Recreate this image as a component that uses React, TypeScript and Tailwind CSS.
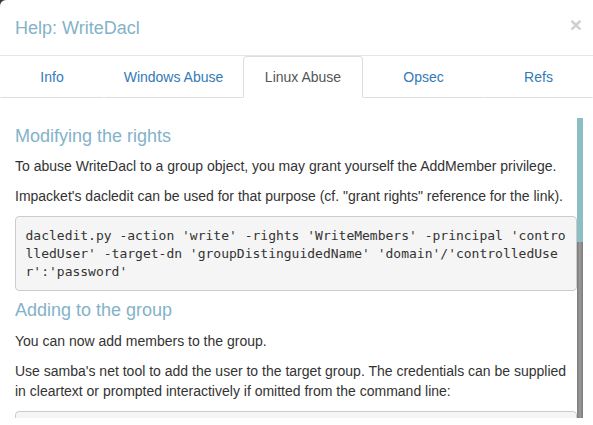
import React from 'react';

const tabs = [
    { label: 'Info', width: 'w-[104px]' },
    { label: 'Windows Abuse', width: 'w-[139px]' },
    { label: 'Linux Abuse', width: 'w-[120px]', active: true },
    { label: 'Opsec', width: 'w-[121px]' },
    { label: 'Refs', width: 'w-[109px]' },
];

function Heading({ children, first }: { children: React.ReactNode; first?: boolean }) {
    return (
        <h4 className={`${first ? 'mt-[8.5px]' : 'mt-[10px]'} mb-[10px] text-[18px] leading-[19.8px] text-[#83b3c9]`}>
            {children}
        </h4>
    );
}

function Para({ children }: { children: React.ReactNode }) {
    return <p className="mb-[10px] text-[14px] leading-[20px] text-[#333]">{children}</p>;
}

function Code({ children }: { children: React.ReactNode }) {
    return (
        <pre className="mb-[10px] rounded-[4px] border border-[#ccc] bg-[#f5f5f5] p-[9.5px] text-[13px] leading-[18px] text-[#333] whitespace-pre-wrap break-all font-['DejaVu_Sans_Mono',monospace]">
            {children}
        </pre>
    );
}

export default function App() {
    return (
        <div className="h-[425px] w-[593px] overflow-hidden bg-[#3a3a3a] font-['Liberation_Sans',Arial,sans-serif]">
            <div className="h-full w-full rounded-tl-[6px] bg-white">
                {/* header */}
                <div className="flex h-[56px] items-center justify-between border-b border-[#e5e5e5] px-[15px]">
                    <h4 className="text-[18px] leading-[26px] text-[#83b3c9]">Help: WriteDacl</h4>
                    <span className="-mt-[6px] mr-[-4px] text-[21px] font-bold leading-none text-[#cfcfcf]">×</span>
                </div>

                {/* tabs */}
                <div className="flex">
                    {tabs.map((t) =>
                        t.active ? (
                            <div
                                key={t.label}
                                className={`${t.width} flex h-[42px] items-center justify-center rounded-t-[4px] border border-[#ddd] border-b-white text-[14px] text-[#555]`}
                            >
                                {t.label}
                            </div>
                        ) : (
                            <div
                                key={t.label}
                                className={`${t.width} flex h-[42px] items-center justify-center rounded-t-[4px] border border-transparent border-b-[#ddd] text-[14px] text-[#337ab7]`}
                            >
                                {t.label}
                            </div>
                        )
                    )}
                </div>

                {/* tab content */}
                <div className="flex h-[300px] mt-[20px] pl-[15px] pr-[10px]">
                    <div className="flex-1 overflow-hidden">
                        <Heading first>Modifying the rights</Heading>
                        <Para>To abuse WriteDacl to a group object, you may grant yourself the AddMember privilege.</Para>
                        <Para>Impacket's dacledit can be used for that purpose (cf. "grant rights" reference for the link).</Para>
                        <Code>
                            dacledit.py -action 'write' -rights 'WriteMembers' -principal 'controlledUser' -target-dn 'groupDistinguidedName' 'domain'/'controlledUser':'password'
                        </Code>
                        <Heading>Adding to the group</Heading>
                        <Para>You can now add members to the group.</Para>
                        <Para>
                            Use samba's net tool to add the user to the target group. The credentials can be supplied in cleartext or prompted interactively if omitted from the command line:
                        </Para>
                        <Code>
                            net rpc group addmem "TargetGroup" "TargetUser" -U "DOMAIN"/"ControlledUser"%"Password" -S "DomainController"
                        </Code>
                    </div>
                    <div className="flex w-[6px] flex-col">
                        <div className="h-[124px] bg-[#8bbfc4]" />
                        <div className="flex-1 bg-gradient-to-r from-[#7a7a7a] via-[#9a9a9a] to-[#7a7a7a]" />
                    </div>
                </div>
            </div>
        </div>
    );
}
